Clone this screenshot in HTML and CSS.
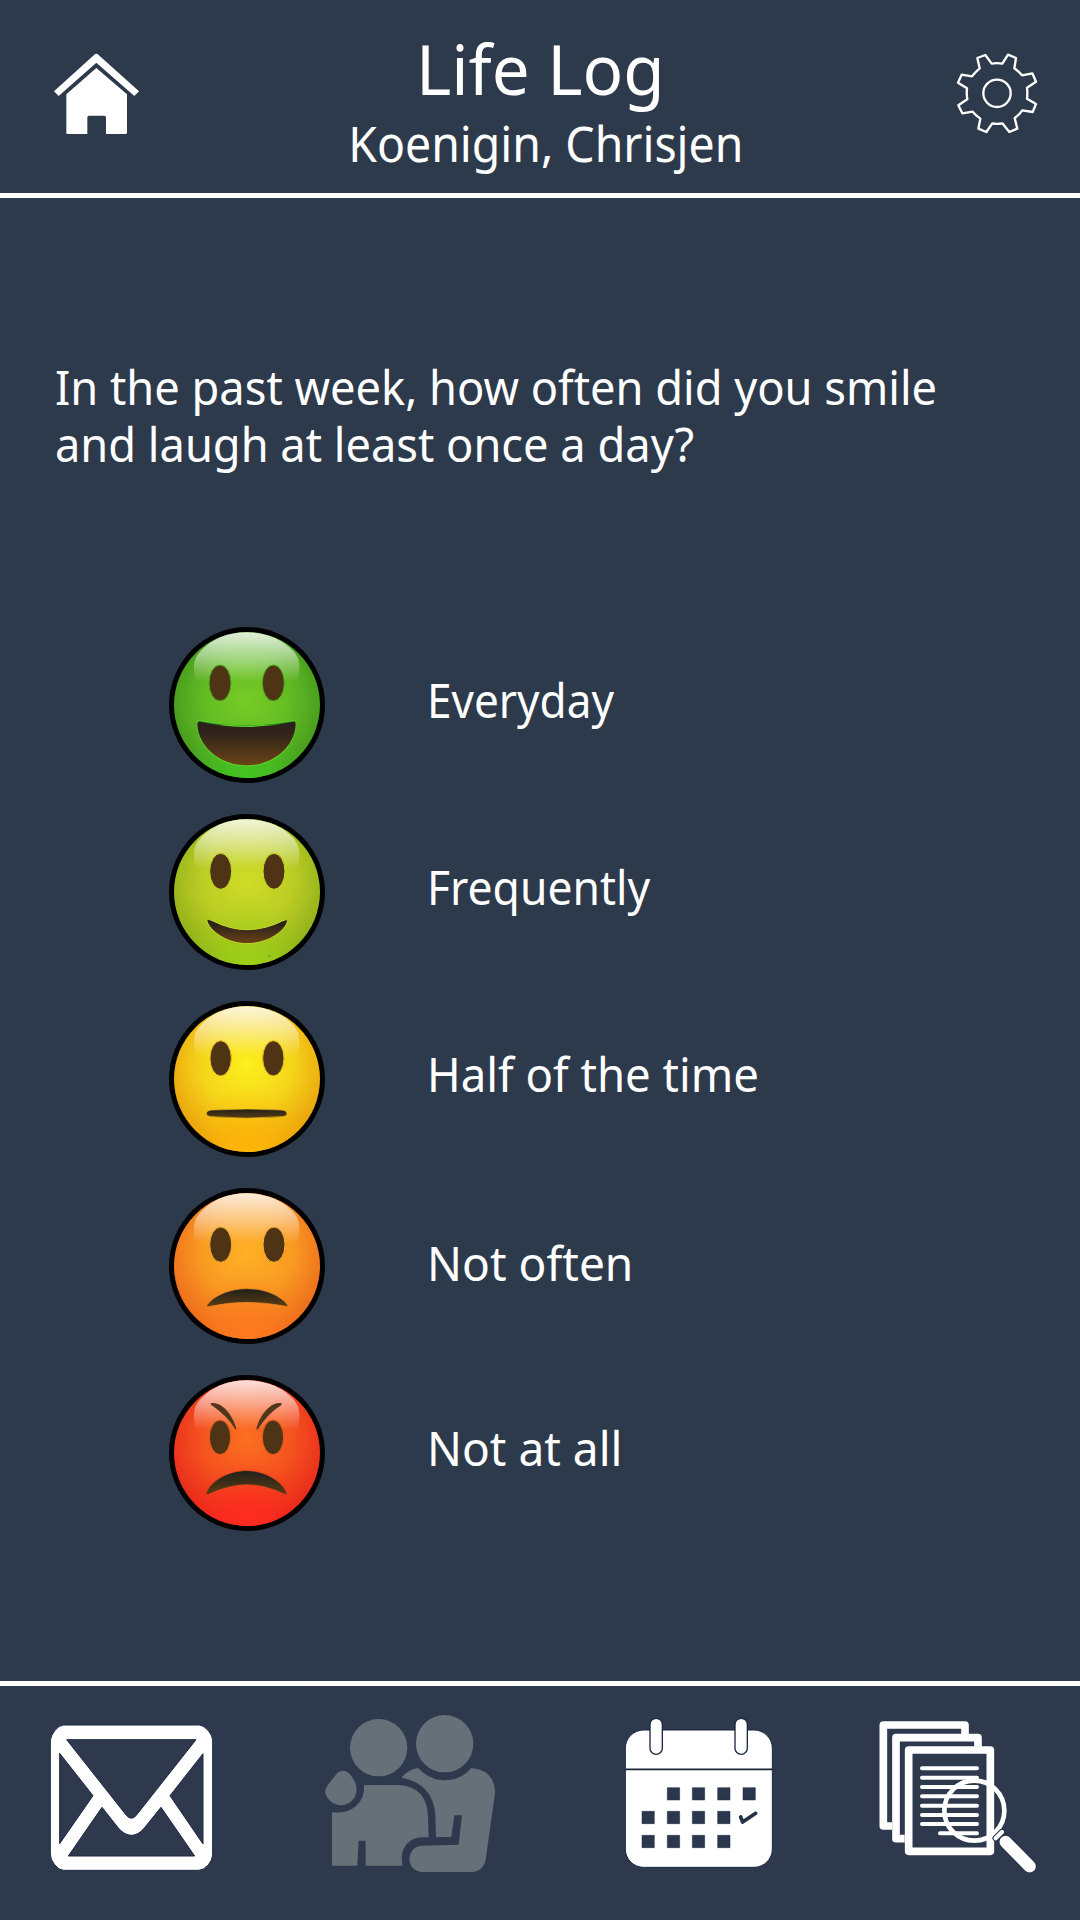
FILE: index.html
```html
<!DOCTYPE html>
<html lang="en">
<head>
<meta charset="utf-8">
<title>Life Log</title>
<link rel="stylesheet" href="styles.css">
</head>
<body>
<svg class="defs" aria-hidden="true">
  <defs>
    <linearGradient id="shine" x1="0" y1="0" x2="0" y2="1">
      <stop offset="0" stop-color="#fff" stop-opacity=".84"/>
      <stop offset=".5" stop-color="#fff" stop-opacity=".45"/>
      <stop offset="1" stop-color="#fff" stop-opacity="0"/>
    </linearGradient>
    <linearGradient id="mouth" x1="0" y1="0" x2="0" y2="1">
      <stop offset="0" stop-color="#2a211b"/>
      <stop offset=".25" stop-color="#30231a"/>
      <stop offset="1" stop-color="#6a4316"/>
    </linearGradient>
    <linearGradient id="frown" x1="0" y1="0" x2="0" y2="1">
      <stop offset="0" stop-color="#20201c"/>
      <stop offset="1" stop-color="#5b3c12"/>
    </linearGradient>
    <radialGradient id="green" cx=".5" cy=".48" r=".56"><stop offset="0" stop-color="#78cb26"/><stop offset=".5" stop-color="#65bd24"/><stop offset="1" stop-color="#43981d"/></radialGradient>
    <radialGradient id="lime" cx=".5" cy=".42" r=".62"><stop offset="0" stop-color="#cfdc26"/><stop offset=".5" stop-color="#bccd24"/><stop offset="1" stop-color="#87aa18"/></radialGradient>
    <radialGradient id="yellow" cx=".5" cy=".4" r=".62"><stop offset="0" stop-color="#fdf01c"/><stop offset=".5" stop-color="#f5d51b"/><stop offset="1" stop-color="#e89a08"/></radialGradient>
    <radialGradient id="orange" cx=".5" cy=".4" r=".62"><stop offset="0" stop-color="#ffb126"/><stop offset=".5" stop-color="#f99b22"/><stop offset="1" stop-color="#eb641b"/></radialGradient>
    <radialGradient id="red" cx=".5" cy=".4" r=".62"><stop offset="0" stop-color="#fc701f"/><stop offset=".5" stop-color="#f5531f"/><stop offset="1" stop-color="#e6231a"/></radialGradient>
    <radialGradient id="glow-green" cx=".5" cy="1" r=".44"><stop offset="0" stop-color="#43c522"/><stop offset=".3" stop-color="#43c522" stop-opacity=".8"/><stop offset="1" stop-color="#43c522" stop-opacity="0"/></radialGradient>
    <radialGradient id="glow-lime" cx=".5" cy="1" r=".44"><stop offset="0" stop-color="#9dd118"/><stop offset=".3" stop-color="#9dd118" stop-opacity=".8"/><stop offset="1" stop-color="#9dd118" stop-opacity="0"/></radialGradient>
    <radialGradient id="glow-yellow" cx=".5" cy="1" r=".44"><stop offset="0" stop-color="#ffb608"/><stop offset=".3" stop-color="#ffb608" stop-opacity=".8"/><stop offset="1" stop-color="#ffb608" stop-opacity="0"/></radialGradient>
    <radialGradient id="glow-orange" cx=".5" cy="1" r=".44"><stop offset="0" stop-color="#ff7a20"/><stop offset=".3" stop-color="#ff7a20" stop-opacity=".8"/><stop offset="1" stop-color="#ff7a20" stop-opacity="0"/></radialGradient>
    <radialGradient id="glow-red" cx=".5" cy="1" r=".44"><stop offset="0" stop-color="#ff2a20"/><stop offset=".3" stop-color="#ff2a20" stop-opacity=".8"/><stop offset="1" stop-color="#ff2a20" stop-opacity="0"/></radialGradient>
    <path id="gloss" fill="url(#shine)" d="M-159-118Q-158-144-138-163Q-85-218 0-218Q85-218 138-163Q156-144 157-118Q158-94 152-70H-154Q-160-94-159-118Z"/>
  </defs>
</svg>

<header class="topbar">
  <svg class="home" viewBox="60 60 270 270">
    <path d="M193 74Q199 68 205 74L327 184L313 198L199 98L86 198L72 184Z"/>
    <path d="M199 114L291 193V308Q291 312 287 312H228V262Q228 257 223 257H177Q172 257 172 262V312H113Q109 312 109 308V193Z"/>
  </svg>
  <div class="titles">
    <h1 class="title">Life Log</h1>
    <p class="person">Koenigin, Chrisjen</p>
  </div>
  <svg class="gear" viewBox="66 60 270 270">
    <path d="M185 101Q201 98 217 101L234 74L258 84L253 115Q266 124 276 136L307 130L318 155L291 173Q293 190 291 206L318 222L308 246L277 241Q267 255 254 264L262 296L238 306L217 280Q201 283 187 280L169 306L145 296L151 266Q137 256 128 245L97 250L85 226L112 208Q109 190 111 175L84 158L95 134L126 139Q136 126 149 115L142 84L166 75Z"/>
    <circle cx="201" cy="190" r="41"/>
  </svg>
</header>

<main class="survey">
  <p class="question">In the past week, how often did you smile<br>and laugh at least once a day?</p>
  <ul class="options">
    <li class="option">
      <svg class="face" viewBox="-234 -234 468 468">
        <circle r="234"/><circle r="219" fill="url(#green)"/><circle r="219" fill="url(#glow-green)"/><use href="#gloss"/>
        <g transform="translate(-291 -285)">
          <path fill="#5ccb27" d="M140 335Q144 327 155 331Q291 360 425 331Q436 327 439 337C439 410 375 470 290 470C205 470 140 410 140 340Z"/>
          <path fill="#1f8f22" d="M146 333Q291 360 434 333L434 345H146Z"/>
          <path fill="url(#mouth)" d="M142 340Q145 332 155 336Q291 366 425 336Q436 332 437 340C437 405 375 466 290 466C205 466 142 405 142 340Z"/>
          <g class="eyes green-rim"><ellipse cx="210" cy="219" rx="33" ry="54"/><ellipse cx="370" cy="219" rx="33" ry="54"/></g>
        </g>
      </svg>
      <span class="label everyday">Everyday</span>
    </li>
    <li class="option">
      <svg class="face" viewBox="-234 -234 468 468">
        <circle r="234"/><circle r="219" fill="url(#lime)"/><circle r="219" fill="url(#glow-lime)"/><use href="#gloss"/>
        <g transform="translate(-291 -846)">
          <path fill="url(#mouth)" stroke="#c3dc25" stroke-width="3" d="M170 930Q173 925 187 932Q240 959 291 959Q345 959 399 932Q411 926 413 932C406 962 355 1001 291 1001C232 1001 178 964 170 930Z"/>
          <g class="eyes lime-rim"><ellipse cx="212" cy="784" rx="33" ry="54"/><ellipse cx="372" cy="784" rx="33" ry="54"/></g>
          <circle cx="358" cy="1038" r="2.5" fill="#536c17"/>
        </g>
      </svg>
      <span class="label frequently">Frequently</span>
    </li>
    <li class="option">
      <svg class="face" viewBox="-234 -234 468 468">
        <circle r="234"/><circle r="219" fill="url(#yellow)"/><circle r="219" fill="url(#glow-yellow)"/><use href="#gloss"/>
        <g transform="translate(-291 -282)">
          <path fill="url(#frown)" stroke="#fac819" stroke-width="2" d="M169 386Q169 377 184 375Q290 369 396 375Q411 377 411 387Q411 393 399 395Q290 404 181 395Q169 393 169 386Z"/>
          <g class="eyes yellow-rim"><ellipse cx="212" cy="220" rx="32" ry="53"/><ellipse cx="370" cy="220" rx="32" ry="53"/></g>
        </g>
      </svg>
      <span class="label half">Half of the time</span>
    </li>
    <li class="option">
      <svg class="face" viewBox="-234 -234 468 468">
        <circle r="234"/><circle r="219" fill="url(#orange)"/><circle r="219" fill="url(#glow-orange)"/><use href="#gloss"/>
        <g transform="translate(-291 -843)">
          <path fill="url(#frown)" stroke="#e58a20" stroke-width="2" d="M171 961C188 934 236 911 292 911C346 911 393 933 413 960Q414 967 405 963Q345 952 291 952Q237 952 180 964Q170 967 171 961Z"/>
          <g class="eyes orange-rim"><ellipse cx="212" cy="779" rx="33" ry="53"/><ellipse cx="372" cy="779" rx="33" ry="53"/></g>
        </g>
      </svg>
      <span class="label not-often">Not often</span>
    </li>
    <li class="option">
      <svg class="face" viewBox="-234 -234 468 468">
        <circle r="234"/><circle r="219" fill="url(#red)"/><circle r="219" fill="url(#glow-red)"/><use href="#gloss"/>
        <g transform="translate(-291 -279)">
          <path fill="url(#frown)" stroke="#e14420" stroke-width="2" d="M168 400C181 363 233 332 290 332C344 332 397 363 411 400Q411 406 402 402Q344 374 290 374Q236 374 176 403Q168 406 168 400Z"/>
          <g class="eyes red-rim"><ellipse cx="210" cy="232" rx="32" ry="52"/><ellipse cx="369" cy="232" rx="32" ry="52"/></g>
          <path fill="#50361a" d="M182 130Q193 126 212 136Q243 155 259 205Q258 211 253 203Q230 166 183 134ZM395 130Q384 126 365 136Q331 160 319 206Q321 212 326 204Q351 163 394 135Z"/>
        </g>
      </svg>
      <span class="label not-at-all">Not at all</span>
    </li>
  </ul>
</main>

<nav class="tabs">
  <svg class="tab mail" viewBox="0 48 606 621">
    <path class="outlined" fill-rule="evenodd" d="M101 165H509Q520 165 536 183Q548 198 548 212V555Q547 570 535 585Q520 601 506 601H101Q86 601 73 583Q61 568 61 552V212Q62 198 74 182Q88 165 101 165Z
      M110 209L290 437Q304 452 318 437L498 209Z M89 250V521L189 377Z M519 251L420 377L519 522Z M216 412L115 558H494L393 412L343 474Q325 496 304 496Q284 496 265 474Z"/>
  </svg>
  <svg class="tab friends" viewBox="36 48 615 621">
    <circle cx="236" cy="233" r="86"/>
    <circle cx="434" cy="221" r="86"/>
    <path d="M112 309Q130 296 146 309Q169 332 170 359Q166 400 124 406Q85 403 75 366Q76 354 84 344Z"/>
    <path d="M192 345H295Q381 349 384 440L386 502H365C322 504 297 541 308 587H197V512H176L172 587H96V426Q140 433 168 408Q195 384 192 345Z"/>
    <path d="M304 323Q326 298 354 294Q390 331 434 331Q484 330 514 294Q585 300 585 370L557 569Q549 605 514 606H366Q329 602 328 565Q332 530 363 527L476 524L486 436H463L454 501H408L406 435Q400 341 304 323Z"/>
  </svg>
  <svg class="tab calendar" viewBox="0 48 600 621">
    <rect class="outlined" x="76" y="180" width="441" height="412" rx="55"/>
    <path class="rule" d="M76 298H517"/>
    <rect class="ring" x="150" y="145" width="37" height="108" rx="18.5"/>
    <rect class="ring" x="405" y="145" width="37" height="108" rx="18.5"/>
    <path class="days" d="M202 353h37v37h-37zM277 353h37v37h-37zM353 353h37v37h-37zM429 353h37v37h-37zM126 424h37v37h-37zM202 424h37v37h-37zM277 424h37v37h-37zM353 424h37v37h-37zM126 496h37v37h-37zM202 496h37v37h-37zM277 496h37v37h-37zM353 496h37v37h-37z"/>
    <path class="check" d="M422 441L428 456L467 430"/>
  </svg>
  <svg class="tab records" viewBox="0 48 600 621">
    <g class="pages">
      <path d="M315 192V165H70V468H96"/>
      <path d="M354 230V203H108V506H134"/>
      <rect x="146" y="240" width="245" height="304"/>
    </g>
    <path class="lines" d="M186 295H351M186 323H351M186 351H351M186 379H351M186 407H351M186 435H351M186 462H351M240 490H351"/>
    <circle class="lens" cx="343" cy="422" r="90"/>
    <path class="neck-edge" d="M407 505L426 486"/><path class="neck" d="M407 505L426 486"/>
    <path class="handle-edge" d="M437 516L509 589"/><path class="handle" d="M437 516L509 589"/>
  </svg>
</nav>
</body>
</html>
```
FILE: styles.css
```css
* { box-sizing: border-box; }

body {
  margin: 0;
  width: 1080px;
  height: 1920px;
  display: flex;
  flex-direction: column;
  background: #2d3a4b;
  color: #fff;
  font-family: "Noto Sans", "Open Sans", sans-serif;
  overflow: hidden;
}

h1, p, ul { margin: 0; padding: 0; font-weight: 400; }
.defs { position: absolute; width: 0; height: 0; }

.topbar {
  height: 198px;
  border-bottom: 5px solid #fff;
  display: grid;
  grid-template-columns: 90px 1fr 90px;
  padding: 0 38px 0 50px;
}
.home { width: 90px; height: 90px; margin-top: 50px; fill: #fff; }
.gear { width: 90px; height: 90px; margin-top: 50px; fill: none; stroke: #fff; stroke-width: 7; stroke-linejoin: round; }
.titles {
  display: flex;
  flex-direction: column;
  align-items: center;
  padding-top: 28px;
  white-space: nowrap;
}
.title { font-size: 70px; line-height: 80px; margin-right: 12px; transform: scaleX(.962); }
.person { font-size: 49px; line-height: 60px; margin-top: 5px; transform: scaleX(.946); }

.survey { height: 1483px; padding: 160px 0 0 55px; }
.question {
  font-size: 48px;
  line-height: 57px;
  white-space: nowrap;
  transform: scaleX(.942);
  transform-origin: left;
}
.options {
  list-style: none;
  display: flex;
  flex-direction: column;
  gap: 31px;
  margin-top: 155px;
  padding-left: 114px;
}
.option { display: flex; align-items: center; gap: 102px; height: 156px; }
.label {
  font-size: 48px;
  line-height: 60px;
  padding-bottom: 11px;
  white-space: nowrap;
  transform-origin: left;
}
.everyday { transform: scaleX(.919); }
.frequently { transform: scaleX(.926); }
.half { transform: scaleX(.948); }
.not-often { padding-bottom: 7px; transform: scaleX(.96); }
.not-at-all { transform: scaleX(.959); }

.face { width: 156px; height: 156px; }
.eyes { fill: #4e3414; stroke-width: 3; }
.green-rim { stroke: #4cae20; }
.lime-rim { stroke: #c8dc20; }
.yellow-rim { stroke: #ecc21a; }
.orange-rim { stroke: #f8b02a; }
.red-rim { stroke: #e8601f; }

.tabs {
  height: 239px;
  border-top: 5px solid #fff;
  display: grid;
  grid-template-columns: 282px 288px 260px 220px;
  padding-left: 30px;
}
.tab { height: 207px; fill: #fff; background: #2e394d; }
.mail { width: 202px; }
.friends { width: 205px; fill: #657078; }
.calendar, .records { width: 200px; }
.outlined { stroke: #1c2942; stroke-width: 3; }
.rule { stroke: #1a2438; stroke-width: 5; }
.ring { stroke: #1c2942; stroke-width: 4; }
.days { fill: #2b374c; stroke: #1c2942; stroke-width: 1.5; }
.check { fill: none; stroke: #243048; stroke-width: 11; stroke-linecap: round; stroke-linejoin: round; }
.pages { fill: none; stroke: #fff; stroke-width: 23; stroke-linejoin: round; }
.lines { stroke: #fff; stroke-width: 12; stroke-linecap: round; }
.lens { fill: none; stroke: #fff; stroke-width: 14; }
.neck-edge, .handle-edge { stroke: #1f2c44; stroke-linecap: round; }
.neck, .handle { stroke: #fff; stroke-linecap: round; }
.neck-edge { stroke-width: 19; }
.neck { stroke-width: 13; }
.handle-edge { stroke-width: 42; }
.handle { stroke-width: 37; }
```
